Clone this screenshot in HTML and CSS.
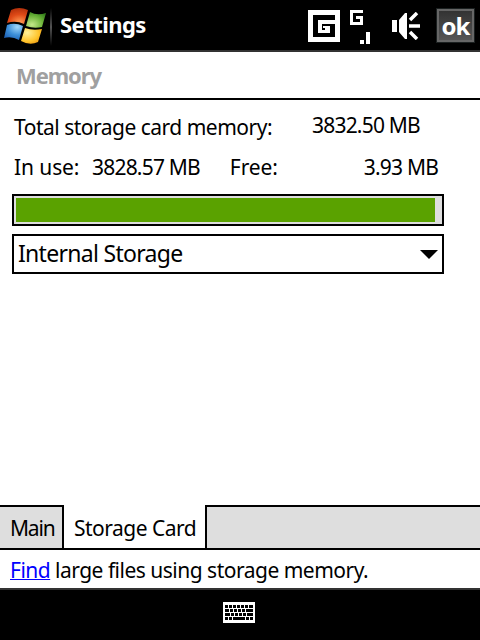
FILE: index.html
```html
<!DOCTYPE html>
<html lang="en">
  <head>
    <meta charset="UTF-8" />
    <meta name="viewport" content="width=device-width, initial-scale=1.0" />
    <title>Settings</title>
    <link rel="stylesheet" href="styles.css">
  </head>
  <body>
    <div class="screen">
      <header class="topbar">
        <svg class="start" width="46" height="46" viewBox="0 0 46 46">
          <defs>
            <radialGradient id="red" cx="0.6" cy="0.9" r="1"><stop offset="0" stop-color="#ff9c55" /><stop offset="0.5" stop-color="#df4a17" /><stop offset="1" stop-color="#a82a08" /></radialGradient>
            <radialGradient id="green" cx="0.3" cy="0.8" r="0.9"><stop offset="0" stop-color="#c5e88a" /><stop offset="0.6" stop-color="#6db43a" /><stop offset="1" stop-color="#35801c" /></radialGradient>
            <radialGradient id="blue" cx="0.7" cy="0.2" r="1"><stop offset="0" stop-color="#a2d8fa" /><stop offset="0.5" stop-color="#3b8ed8" /><stop offset="1" stop-color="#1653a8" /></radialGradient>
            <radialGradient id="yellow" cx="0.3" cy="0.3" r="0.9"><stop offset="0" stop-color="#fff19a" /><stop offset="0.6" stop-color="#ffc52d" /><stop offset="1" stop-color="#e58a08" /></radialGradient>
          </defs>
          <path fill="url(#red)" d="M11 10Q19 6 28 10L24 24Q16 20 7 23Z" />
          <path fill="url(#green)" d="M30 12Q37 16 46 13L42 27Q34 29 26 26Z" />
          <path fill="url(#blue)" d="M7 25Q15 22 23 26L19 40Q12 36 4 38Z" />
          <path fill="url(#yellow)" d="M25 28Q33 31 42 29L38 42Q30 46 21 41Z" />
        </svg>
        <span class="divider"></span>
        <h1>Settings</h1>
        <div class="status">
          <svg width="32" height="32" viewBox="0 0 32 32" shape-rendering="crispEdges">
            <path fill="#fff" fill-rule="evenodd" d="M0 0H32V32H0ZM5 5V27H27V5Z" />
            <path fill="#fff" d="M10 10H27V14H14V19H17V18H15V15H22V23H10Z" />
            <path d="M14 14H27V16H14ZM14 16H15V19H17V20H14Z" />
          </svg>
          <svg class="signal" width="20" height="34" viewBox="0 0 20 34" shape-rendering="crispEdges">
            <path fill="#fff" d="M0 0H13V3H3V12H10V9H6V6H13V15H0ZM10 30H14V34H10ZM16 22H20V34H16Z" />
          </svg>
          <svg class="speaker" width="28" height="28" viewBox="0 0 28 28">
            <path fill="#fff" d="M0 8H5V20H0ZM7 8L13 1H15V27H13L7 20Z" />
            <path stroke="#fff" stroke-width="3.5" d="M17 14H28M18 8L25 1M18 20L25 27" />
          </svg>
          <button class="ok">ok</button>
        </div>
      </header>
      <h2>Memory</h2>
      <main>
        <div class="row total">
          <span class="label">Total storage card memory:</span>
          <span class="number">3832.50 MB</span>
        </div>
        <div class="row usage">
          <span class="in-use">In use:</span>
          <span class="number">3828.57 MB</span>
          <span class="free">Free:</span>
          <span class="number left">3.93 MB</span>
        </div>
        <div class="meter"><div class="fill"></div></div>
        <div class="select">
          <span>Internal Storage</span>
          <svg width="18" height="9" viewBox="0 0 18 9"><path d="M0 0H18L9 9Z" /></svg>
        </div>
      </main>
      <nav>
        <a class="tab main-tab">Main</a>
        <a class="tab active">Storage Card</a>
        <span class="rest"></span>
      </nav>
      <p class="hint"><a class="find">Find</a><span class="about">large files using storage memory.</span></p>
      <footer>
        <svg width="32" height="21" viewBox="0 0 32 21" shape-rendering="crispEdges">
          <rect width="32" height="21" rx="1" fill="#fff" />
          <path d="M2 3h3v3h-3zM6 3h3v3h-3zM10 3h3v3h-3zM14 3h3v3h-3zM18 3h3v3h-3zM22 3h3v3h-3zM26 3h4v3h-4z" />
          <path d="M2 7h4v3h-4zM7 7h3v3h-3zM11 7h3v3h-3zM15 7h3v3h-3zM19 7h3v3h-3zM23 7h7v3h-7z" />
          <path d="M2 11h5v3h-5zM8 11h3v3h-3zM12 11h3v3h-3zM16 11h3v3h-3zM20 11h3v3h-3zM24 11h6v3h-6z" />
          <path d="M2 15h3v3h-3zM6 15h3v3h-3zM10 15h12v3h-12zM23 15h3v3h-3zM27 15h3v3h-3z" />
        </svg>
      </footer>
    </div>
  </body>
</html>
```
FILE: styles.css
```css
* {
  box-sizing: border-box;
}
body {
  margin: 0;
  font-family: "Noto Sans", sans-serif;
  font-size: 21px;
  line-height: 30px;
  letter-spacing: -0.5px;
  color: #000;
  background-color: #fff;
}
.screen {
  display: flex;
  flex-direction: column;
  width: 480px;
  height: 640px;
  white-space: nowrap;
}
.topbar {
  display: flex;
  height: 52px;
  background-color: #000;
  border-bottom: 2px solid #333;
}
.divider {
  width: 2px;
  height: 38px;
  margin: 8px 8px 0 4px;
  background: linear-gradient(#000, #555, #000);
}
h1 {
  margin: 9px 0 0;
  color: #fff;
  font-size: 22px;
  line-height: 30px;
  letter-spacing: -0.55px;
}
.status {
  display: flex;
  margin-left: auto;
  padding: 10px 6px 0 0;
}
.signal {
  margin-left: 10px;
}
.speaker {
  margin: 2px 17px 0 22px;
}
.ok {
  width: 37px;
  height: 33px;
  margin-top: -1px;
  padding: 0;
  border: 2px solid #666;
  outline: 1px solid #1b2020;
  background: linear-gradient(#333, #555);
  color: #fff;
  font: bold 24px/29px "Noto Sans", sans-serif;
  letter-spacing: -1px;
}
h2 {
  height: 48px;
  margin: 0;
  padding: 8px 16px 0;
  border-bottom: 2px solid #000;
  color: #a0a0a0;
  font-size: 22px;
  line-height: 30px;
  letter-spacing: -1.1px;
}
main {
  display: flex;
  flex-direction: column;
  flex: 1;
  padding: 10px 36px 0 12px;
}
.row {
  display: flex;
  height: 40px;
  padding-left: 2px;
}
.total {
  height: 42px;
}
.label {
  width: 298px;
  padding-top: 2px;
}
.number {
  letter-spacing: -0.8px;
}
.in-use {
  width: 78px;
  letter-spacing: -0.1px;
}
.free {
  margin-left: 30px;
  letter-spacing: -0.1px;
}
.left {
  margin-left: auto;
  padding-right: 6px;
}
.meter {
  height: 32px;
  margin-top: 2px;
  padding: 2px;
  border: 2px solid #000;
  background-color: #dedede;
}
.fill {
  width: 419px;
  height: 24px;
  background-color: #5aa200;
}
.select {
  display: flex;
  justify-content: space-between;
  align-items: center;
  height: 40px;
  margin-top: 8px;
  padding: 0 4px;
  border: 2px solid #000;
  font-size: 23px;
  letter-spacing: -0.7px;
}
.select span {
  padding-bottom: 3px;
}
nav {
  display: flex;
  height: 45px;
}
.tab,
.rest {
  border-top: 2px solid #000;
  border-bottom: 2px solid #000;
  background-color: #dedede;
}
.tab {
  padding: 6px 0 0 10px;
}
.main-tab {
  width: 64px;
  border-right: 2px solid #000;
  letter-spacing: -1.2px;
}
.active {
  width: 141px;
  border-top-color: #fff;
  background-color: #fff;
}
.rest {
  flex: 1;
  border-left: 2px solid #000;
}
.hint {
  display: flex;
  height: 38px;
  margin: 0;
  padding: 5px 10px;
}
.find {
  width: 45px;
  color: #00f;
  text-decoration: underline;
  text-decoration-thickness: 1px;
}
footer {
  display: flex;
  justify-content: center;
  height: 52px;
  padding: 12px 2px 0 0;
  border-top: 2px solid #333;
  background-color: #000;
}
```
